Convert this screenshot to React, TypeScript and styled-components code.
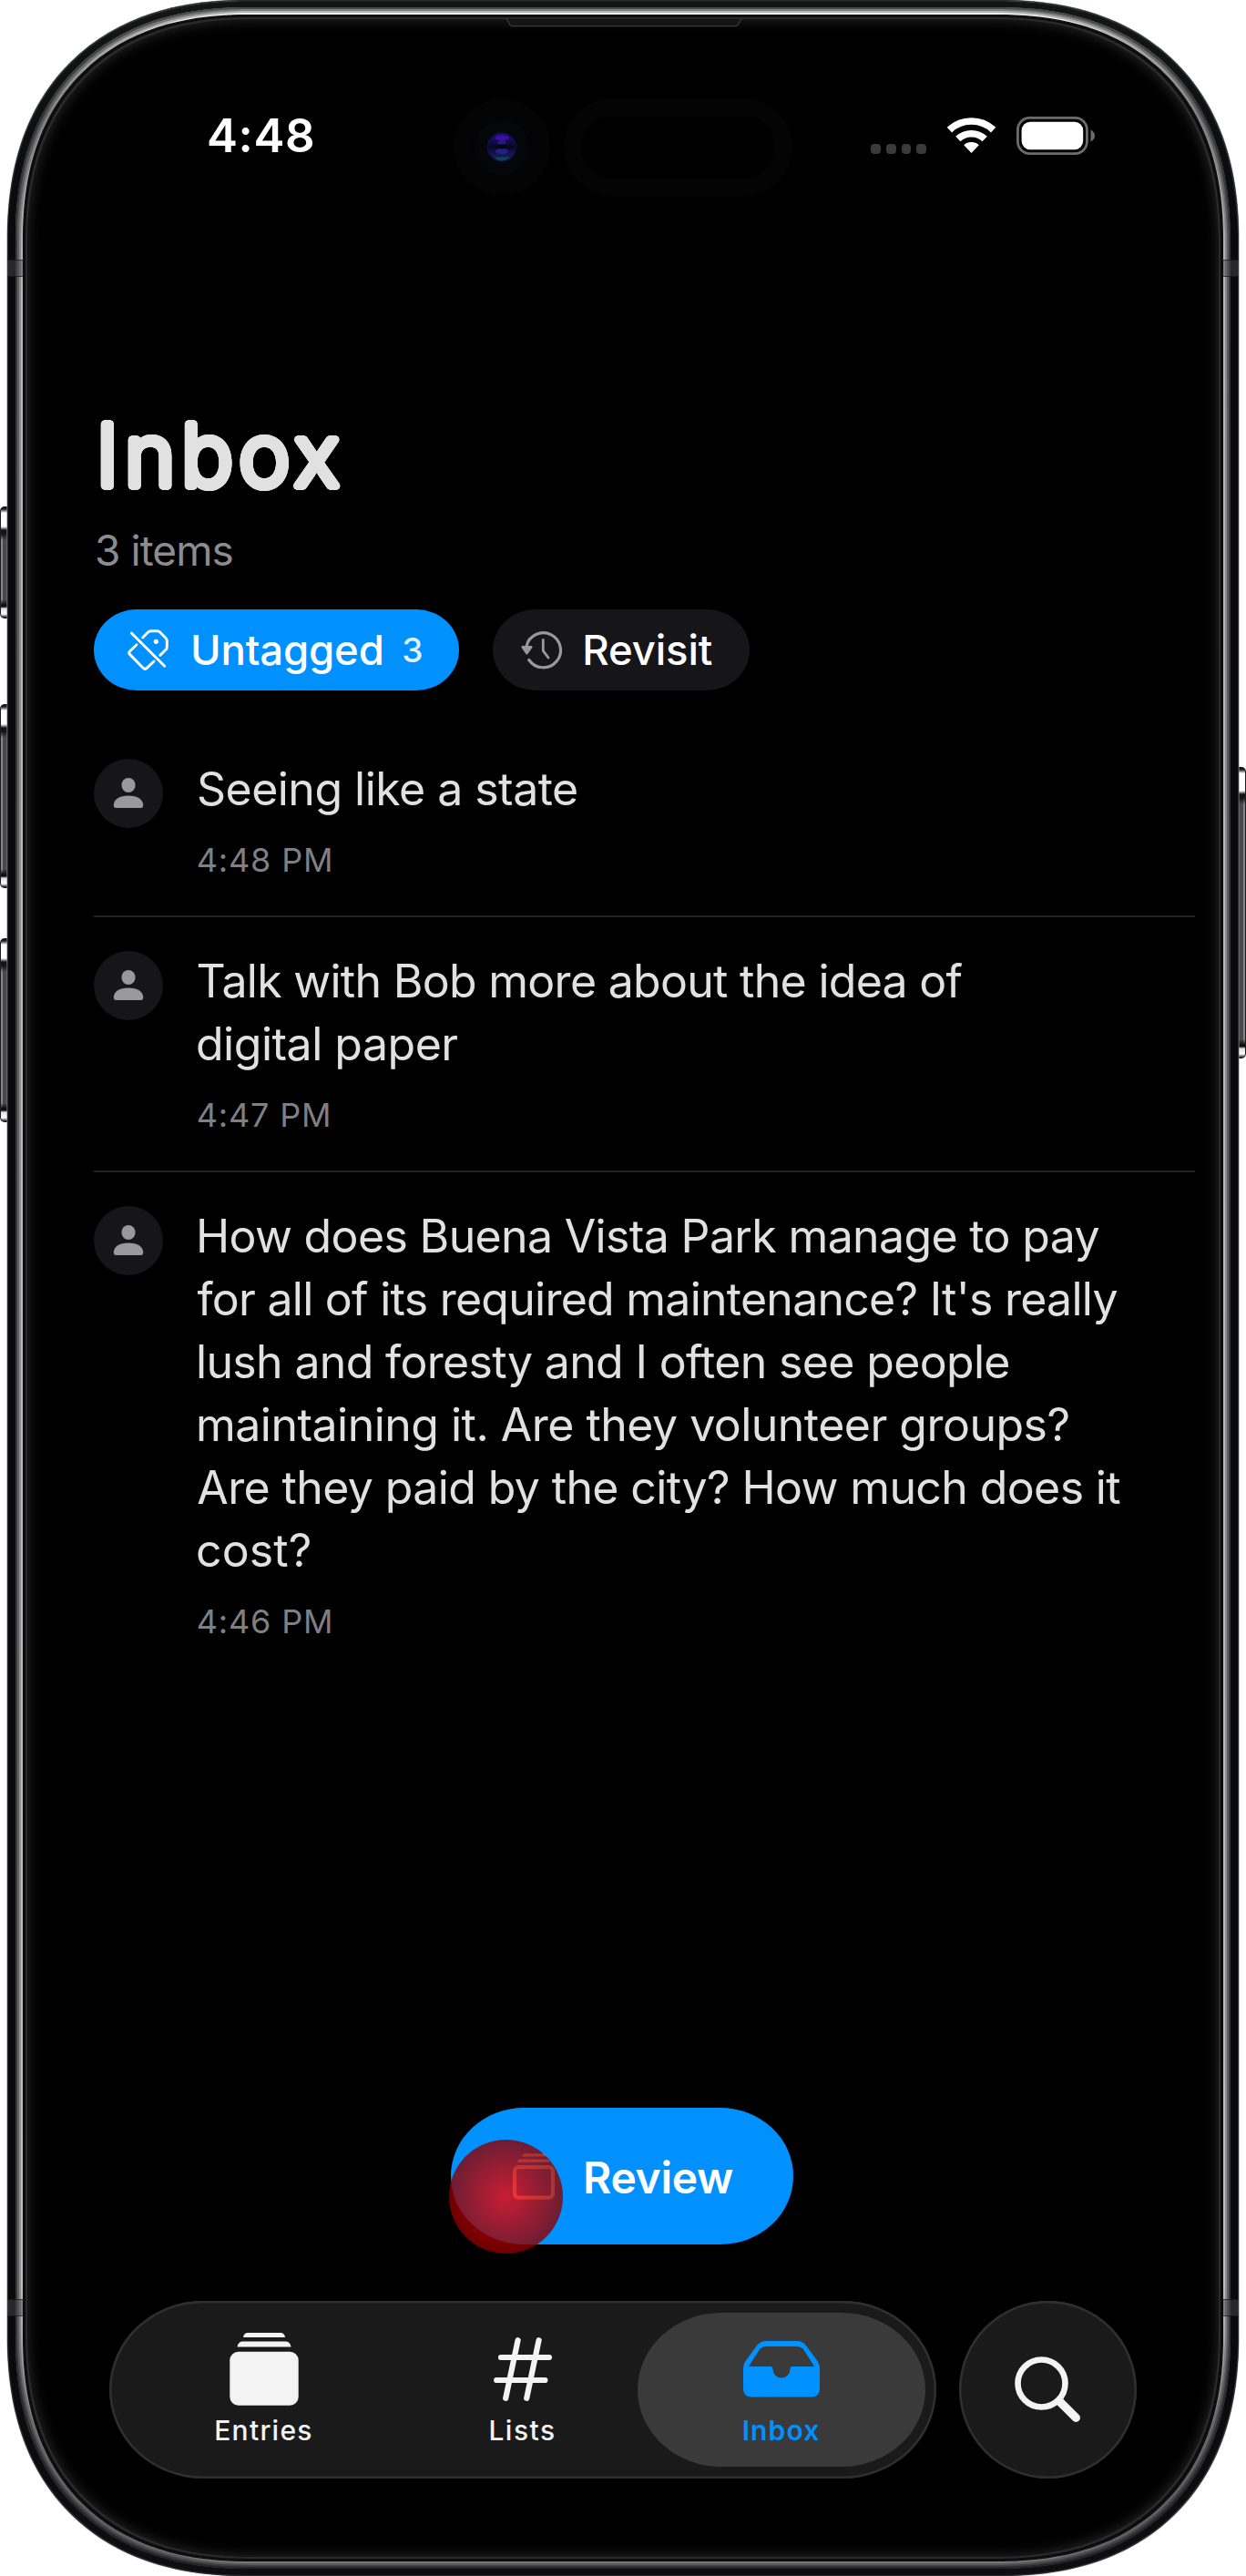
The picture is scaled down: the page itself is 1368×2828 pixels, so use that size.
import React from "react";
import styled, { createGlobalStyle, css } from "styled-components";

const BLUE = "#0091ff";
const SOFT_WHITE = "#f3f3f3";
const SECONDARY = "#8b8b90";

const Global = createGlobalStyle`
  *, *::before, *::after { box-sizing: border-box; }
  body { margin: 0; background: #fff; }
`;

/* Continuous-curvature corners, with plain round ones as the fallback. */
const corners = (round: number, smooth: number) => css`
  border-radius: ${round}px;
  @supports (corner-shape: superellipse(1.2)) {
    border-radius: ${smooth}px;
    corner-shape: superellipse(1.2);
  }
`;

/* ---------- Device shell ---------- */

const Page = styled.div`
  position: relative;
  width: 1368px;
  height: 2828px;
  padding: 0 8px;
  overflow: hidden;
  background: #fff;
  font-family: Inter, "Liberation Sans", sans-serif;
  -webkit-font-smoothing: antialiased;
`;

const Body = styled.div`
  position: relative;
  width: 1352px;
  height: 2828px;
  padding: 8px 9px;
  ${corners(237, 265)}
  background: linear-gradient(180deg, #141615 0, #0a0a0d 240px, #0a0a0d 2600px, #0e0e11 100%);
  box-shadow: 0 0 0 0.5px #8a8d8c, inset 0 0 0 1px #2a2c2c, inset 0 1px 1px #7f8784;
`;

const Ring = styled.div`
  position: relative;
  height: 100%;
  padding: 9px;
  ${corners(228, 256)}
  background: linear-gradient(180deg, #f0f0f0 0, #e6e6e6 30px, #a9a9ab 120px, #b6b6b8 320px, #bdbdbf 2500px, #8a8a8d 2640px, #77777a 100%);
  box-shadow:
    inset 0 0 0 2px rgba(0, 0, 0, 0.4),
    inset 0 0 0 4px rgba(0, 0, 0, 0.3),
    inset 0 0 0 6px rgba(0, 0, 0, 0.25);
`;

const Screen = styled.main`
  position: relative;
  display: flex;
  flex-direction: column;
  height: 100%;
  padding-bottom: 90px;
  ${corners(219, 247)}
  background: #000;
  box-shadow:
    0 0 0 1px #0a0a0a,
    inset 0 0 0 2px #0c0c0d,
    inset 0 0 0 4px #2a2a2b,
    inset 0 0 16px 4px #2c2c2d;
`;

const Antenna = styled.span<{ $side: "left" | "right"; $top: number }>`
  position: absolute;
  ${(p) => p.$side}: 0;
  top: ${(p) => p.$top}px;
  width: 17px;
  height: 19px;
  background: rgba(70, 70, 72, 0.5);
  border: solid rgba(11, 11, 12, 0.6);
  border-width: 1px 0;
`;

const SideButton = styled.span<{ $side: "left" | "right"; $top: number; $height: number; $cap: number }>`
  position: absolute;
  ${(p) => p.$side}: 0;
  top: ${(p) => p.$top}px;
  width: 9px;
  height: ${(p) => p.$height}px;
  border-radius: ${(p) => (p.$side === "left" ? "5px 0 0 5px" : "0 5px 5px 0")};
  background:
    linear-gradient(
      180deg,
      #0a0a0a 0,
      #222 3px,
      #fff 7px,
      #fff ${(p) => p.$cap - 2}px,
      #141416 ${(p) => p.$cap + 2}px,
      #141416 ${(p) => p.$cap + 6}px,
      transparent ${(p) => p.$cap + 13}px,
      transparent calc(100% - 21px),
      #0d0d0e calc(100% - 15px),
      #0d0d0e calc(100% - 13px),
      #ddd calc(100% - 11px),
      #fff calc(100% - 5px),
      #111 calc(100% - 1px)
    ),
    linear-gradient(
      ${(p) => (p.$side === "left" ? "90deg" : "270deg")},
      #0a0a0a 0, #0a0a0a 1px, #858587 1.5px, #858587 2.5px, #4a4a4c 3.5px, #4a4a4c 7px, #1b1b1d 9px
    );
  box-shadow: inset ${(p) => (p.$side === "left" ? "1px" : "-1px")} 0 0 #1c1c1c;
`;

const Earpiece = styled.svg`
  position: absolute;
  left: 529px;
  top: 3px;
`;

const Camera = styled.svg`
  position: absolute;
  left: 472px;
  top: 91px;
`;

const Island = styled.span`
  position: absolute;
  left: 593px;
  top: 91px;
  width: 251px;
  height: 107px;
  border: 19.5px solid #040404;
  border-radius: 54px;
`;

/* ---------- Status bar ---------- */

const StatusBar = styled.header`
  display: flex;
  align-items: center;
  justify-content: space-between;
  flex: none;
  height: 263px;
  padding: 0 139px 0 201px;
`;

const Time = styled.time`
  font-size: 51px;
  font-weight: 600;
  letter-spacing: 0.6px;
  color: #fff;
`;

const StatusIcons = styled.div`
  display: flex;
  align-items: center;
  gap: 23px;
`;

const CellDots = styled.div`
  display: flex;
  gap: 6px;
  margin-top: 30px;
`;

const CellDot = styled.i`
  width: 10.7px;
  height: 11px;
  border-radius: 4px;
  background: #3a3a3b;
`;

/* ---------- Heading and filters ---------- */

const Content = styled.section`
  flex: 1;
  padding: 170px 30px 0 77px;
`;

/* A light face thickened by a round outline gives the soft letter ends. */
const ring = (r: number, n: number) =>
  Array.from({ length: n }, (_, i) => {
    const a = (i / n) * Math.PI * 2;
    return `${(Math.cos(a) * r).toFixed(2)}px ${(Math.sin(a) * r).toFixed(2)}px 0 #e1e1e1`;
  }).join(", ");

const Title = styled.h1`
  margin: 0;
  padding-left: 2.5px;
  font-size: 95px;
  font-weight: 300;
  line-height: 100px;
  letter-spacing: 6.2px;
  color: #e1e1e1;
  text-shadow: ${ring(3.8, 24)};
`;

const Subtitle = styled.p`
  margin: 26px 0 0;
  padding-left: 1px;
  font-size: 46px;
  line-height: 56px;
  letter-spacing: -0.93px;
  color: ${SECONDARY};
`;

const Filters = styled.div`
  display: flex;
  gap: 37px;
  margin: 37px 0 38px;
`;

const Chip = styled.button<{ $active?: boolean }>`
  display: flex;
  align-items: center;
  height: 89px;
  padding: ${(p) => (p.$active ? "0 40px 0 36px" : "0 41px 0 30.5px")};
  border: 0;
  border-radius: 47px / 44.5px;
  background: ${(p) => (p.$active ? BLUE : "#161618")};
  color: #fff;
  font-family: inherit;
`;

const ChipLabel = styled.span<{ $gap: number }>`
  margin-left: ${(p) => p.$gap}px;
  font-size: 45.5px;
  font-weight: 500;
  letter-spacing: -0.15px;
`;

const ChipCount = styled.span`
  margin-left: 19.5px;
  font-size: 37px;
  font-weight: 500;
  color: rgba(255, 255, 255, 0.88);
`;

/* ---------- List ---------- */

const List = styled.ul`
  margin: 0;
  padding: 0;
  list-style: none;
`;

const Row = styled.li`
  display: flex;
  align-items: flex-start;
  gap: 36px;
  padding: 35.5px 0 39px;
  &:not(:last-child) { border-bottom: 2px solid #232325; }
`;

const Avatar = styled.span`
  flex: none;
  width: 76px;
  height: 76px;
  margin-top: 1.5px;
  border-radius: 50%;
  background: #161618;
`;

const RowText = styled.div`
  display: flex;
  flex-direction: column;
  gap: 21.6px;
`;

const Note = styled.p`
  margin: 0;
  font-size: 50px;
  line-height: 69px;
  color: #e1e1e1;
`;

const Line = styled.span<{ $track: number; $shift?: number }>`
  display: block;
  white-space: nowrap;
  padding-left: ${(p) => p.$shift ?? 0}px;
  letter-spacing: ${(p) => p.$track}px;
`;

const Stamp = styled.time`
  padding-left: 0.7px;
  font-size: 36px;
  line-height: 44px;
  letter-spacing: 0.84px;
  color: #7f7f84;
`;

/* ---------- Floating action ---------- */

const Review = styled.button`
  position: relative;
  display: flex;
  align-items: center;
  align-self: center;
  flex: none;
  width: 376px;
  height: 150px;
  margin: 0 2px 62px 0;
  padding: 0 0 0 68px;
  border: 0;
  border-radius: 80px / 75px;
  background: ${BLUE};
  color: #fff;
  font-family: inherit;
`;

const ReviewLabel = styled.span`
  margin: 2px 0 0 31px;
  font-size: 48px;
  font-weight: 600;
  letter-spacing: -0.32px;
`;

const Touch = styled.span`
  position: absolute;
  left: -2px;
  top: 35px;
  width: 125px;
  height: 125px;
  border-radius: 50%;
  background: radial-gradient(circle closest-side, rgba(250, 0, 0, 0.8) 0, rgba(136, 0, 0, 0.8) 100%);
`;

/* ---------- Bottom navigation ---------- */

const BottomBar = styled.nav`
  display: flex;
  flex: none;
  gap: 25px;
  padding-left: 93.5px;
`;

const glass = css`
  height: 195px;
  background: #1a1a1a;
  box-shadow: inset 0 0 0 2.5px #2f2f2f, inset 0 2px 1px -1px #3a3a3a;
`;

const TabGroup = styled.div`
  ${glass}
  display: flex;
  width: 908px;
  padding: 35px 28px 0;
  border-radius: 103px / 97.5px;
`;

const Tab = styled.a<{ $active?: boolean }>`
  position: relative;
  display: flex;
  flex-direction: column;
  align-items: center;
  gap: 9px;
  width: 284px;
  color: ${(p) => (p.$active ? BLUE : SOFT_WHITE)};
  ${(p) =>
    p.$active &&
    css`
      &::before {
        content: "";
        position: absolute;
        left: -16px;
        right: -16px;
        top: -22px;
        height: 169px;
        border-radius: 92px / 84.5px;
        background: #3a3a3a;
      }
    `}
`;

const TabIcon = styled.span`
  position: relative;
  display: flex;
  align-items: center;
  justify-content: center;
  height: 80px;
`;

const TabLabel = styled.span<{ $bold?: boolean; $track: number }>`
  position: relative;
  font-size: 30px;
  font-weight: ${(p) => (p.$bold ? 600 : 500)};
  line-height: 36px;
  letter-spacing: ${(p) => p.$track}px;
`;

const SearchButton = styled.button`
  ${glass}
  display: flex;
  align-items: center;
  justify-content: center;
  width: 195px;
  padding: 0;
  border: 0;
  border-radius: 50%;
`;

/* ---------- Icons ---------- */

const WifiIcon = () => (
  <svg width="53" height="40" viewBox="0 0 53 40" fill="none" stroke="#fff">
    <path d="M2.4 13.6A35 35 0 0 1 50.6 13.6" strokeWidth="7.7" />
    <path d="M11.8 23.6A21.3 21.3 0 0 1 41.2 23.6" strokeWidth="7.6" />
    <path d="M18.2 30.3A12 12 0 0 1 34.8 30.3L26.5 39Z" fill="#fff" stroke="none" />
  </svg>
);

const BatteryIcon = () => (
  <svg width="87" height="42" viewBox="0 0 87 42">
    <rect x="1.4" y="1.4" width="76" height="39.2" rx="13" fill="none" stroke="#6c6c6d" strokeWidth="2.8" />
    <rect x="5.6" y="5.8" width="67.6" height="30.4" rx="9.5" fill="#fff" />
    <path d="M81.5 14.5Q86 17 86 21T81.5 27.5Z" fill="#6c6c6d" />
  </svg>
);

const TagSlashIcon = () => (
  <svg width="47" height="48" viewBox="0 0 47 48" fill="none" stroke="#fff" strokeWidth="2.9" strokeLinecap="round" strokeLinejoin="round">
    <path d="M17.7 10 23.9 3.8Q25 2.7 26.6 2.7H33.8Q35.3 2.7 36.4 3.8L43.2 10.8Q44.3 11.9 44.3 13.4V20.4Q44.3 22 43.2 23L36.8 29.4" />
    <path d="M11 17.7 3.5 25Q1.8 26.7 3.5 28.4L18.3 43.4Q20.3 45.3 22.3 43.4L30 36" />
    <path d="M5.3 5 41.7 41.3" />
    <circle cx="32.3" cy="14.3" r="2.6" fill="#fff" stroke="none" />
  </svg>
);

const HistoryIcon = () => (
  <svg width="46" height="43" viewBox="0 0 46 43" fill="none" stroke="#98989d" strokeWidth="3.2" strokeLinecap="round" strokeLinejoin="round">
    <path d="M6 17.5A19 19 0 1 1 8.8 32.5" />
    <path d="M24.3 10.5V22.3L30 30" strokeWidth="2.8" />
    <path d="M1.6 18.3H11.4L6.4 25.2Z" fill="#98989d" strokeWidth="2.4" />
  </svg>
);

const PersonIcon = () => (
  <svg width="76" height="76" viewBox="0 0 76 76" fill="#98989d">
    <ellipse cx="38" cy="29" rx="7.6" ry="8.1" />
    <path d="M21.8 50.5C22.3 44.5 28 40.6 38 40.6S53.7 44.5 54.2 50.5Q54.4 54 51.4 54H24.6Q21.6 54 21.8 50.5Z" />
  </svg>
);

const StackOutlineIcon = () => (
  <svg width="46" height="51" viewBox="0 0 46 51" fill="#fff">
    <path d="M13 .2H33Q35.4.6 36 3.4H10Q10.6.6 13 .2Z" />
    <path d="M8 6.4H38Q40.6 6.8 41.2 9.8H4.8Q5.4 6.8 8 6.4Z" />
    <rect x="2" y="15.2" width="42" height="33.4" rx="4.5" fill="none" stroke="#fff" strokeWidth="4.2" />
  </svg>
);

const StackIcon = () => (
  <svg width="76" height="80" viewBox="0 0 76 80" fill={SOFT_WHITE}>
    <path d="M19.5 0H56.5Q60.4.6 61 5H15Q15.6.6 19.5 0Z" />
    <path d="M14 9.6H62Q66.6 10.2 67.5 15.4H8.5Q9.4 10.2 14 9.6Z" />
    <rect x="0.3" y="20.8" width="75.4" height="59" rx="9.5" />
  </svg>
);

const HashIcon = () => (
  <svg width="64" height="70" viewBox="0 0 64 70" fill="none" stroke={SOFT_WHITE} strokeWidth="6.2" strokeLinecap="round">
    <path d="M26.6 3.2 13.2 66.8M49.6 3.2 36.2 66.8M8 22H61M3.2 47H56.4" />
  </svg>
);

const TrayIcon = () => (
  <svg width="84" height="62" viewBox="0 0 84 62" fill={BLUE}>
    <path
      fillRule="evenodd"
      d="M0 30Q0 26 2.2 22.5L15 5Q19 0 25 0H59Q65 0 69 5L81.8 22.5Q84 26 84 30V52Q84 61.5 75 61.5H9Q0 61.5 0 52ZM6.5 27 18.5 8.5Q21 6 25 6H59Q63 6 65.5 8.5L77.5 27Q78 28 77 28H54Q51.5 28 51.5 31A9.5 9.5 0 0 1 32.5 31Q32.5 28 30 28H7Q6 28 6.5 27Z"
    />
  </svg>
);

const SearchIcon = () => (
  <svg width="73" height="73" viewBox="0 0 73 73" fill="none" stroke={SOFT_WHITE} strokeLinecap="round">
    <circle cx="29.5" cy="29.5" r="26" strokeWidth="6.6" />
    <path d="M49.5 49.5 67.3 67.3" strokeWidth="9.4" />
  </svg>
);

/* ---------- Data ---------- */

type NoteLine = { text: string; track: number; shift?: number };
type Item = { lines: NoteLine[]; time: string };

const items: Item[] = [
  { lines: [{ text: "Seeing like a state", track: -0.53, shift: 1 }], time: "4:48 PM" },
  {
    lines: [
      { text: "Talk with Bob more about the idea of", track: -0.71, shift: 0.5 },
      { text: "digital paper", track: -0.5 },
    ],
    time: "4:47 PM",
  },
  {
    lines: [
      { text: "How does Buena Vista Park manage to pay", track: -0.65 },
      { text: "for all of its required maintenance? It's really", track: -0.74, shift: 1.5 },
      { text: "lush and foresty and I often see people", track: -0.66 },
      { text: "maintaining it. Are they volunteer groups?", track: -0.52 },
      { text: "Are they paid by the city? How much does it", track: -0.61, shift: 1.3 },
      { text: "cost?", track: 0.1 },
    ],
    time: "4:46 PM",
  },
];

export default function App() {
  return (
    <Page>
      <Global />
      <SideButton $side="left" $top={556} $height={123} $cap={24} />
      <SideButton $side="left" $top={773} $height={202} $cap={24} />
      <SideButton $side="left" $top={1030} $height={202} $cap={24} />
      <SideButton $side="right" $top={842} $height={320} $cap={28} />
      <Body>
        <Ring>
          <Screen>
            <Earpiece width="260" height="10" viewBox="0 0 260 10">
              <path d="M0 .8Q2.2 1 3.2 4.4T7 8.6H253Q256 8 256.8 4.4T260 .8Z" fill="#151515" />
              <path d="M0 .8Q2.2 1 3.2 4.4T7 8.6H253Q256 8 256.8 4.4T260 .8" fill="none" stroke="#383838" strokeWidth="1.2" />
            </Earpiece>
            <Camera width="106" height="107" viewBox="0 0 106 107">
              <defs>
                <linearGradient id="lens" x1="0" y1="0" x2="0" y2="1">
                  <stop offset="0" stopColor="#30088a" />
                  <stop offset=".35" stopColor="#120845" />
                  <stop offset=".5" stopColor="#06061a" />
                  <stop offset=".72" stopColor="#151455" />
                  <stop offset="1" stopColor="#0a2c44" />
                </linearGradient>
              </defs>
              <circle cx="53" cy="53.5" r="53" fill="#040404" />
              <circle cx="53" cy="53.5" r="31" fill="#05060a" stroke="#020208" strokeWidth="2" />
              <circle cx="53" cy="53.5" r="15.4" fill="url(#lens)" stroke="#0e1040" strokeWidth="1.6" />
              <ellipse cx="53" cy="43.5" rx="7.5" ry="2.8" fill="#4b10c0" opacity=".7" />
              <ellipse cx="53" cy="48.5" rx="4.5" ry="2.4" fill="#2a2490" opacity=".7" />
              <ellipse cx="53" cy="58" rx="7" ry="3.2" fill="#2b2a9a" opacity=".7" />
              <ellipse cx="53" cy="53" rx="3.6" ry="2.4" fill="#04040f" />
              <path d="M44 64.5H62Q58 68.5 53 68.5T44 64.5Z" fill="#0d4a63" opacity=".8" />
            </Camera>
            <Island />
            <StatusBar>
              <Time>4:48</Time>
              <StatusIcons>
                <CellDots>
                  <CellDot />
                  <CellDot />
                  <CellDot />
                  <CellDot />
                </CellDots>
                <WifiIcon />
                <BatteryIcon />
              </StatusIcons>
            </StatusBar>
            <Content>
              <Title>Inbox</Title>
              <Subtitle>3 items</Subtitle>
              <Filters>
                <Chip $active>
                  <TagSlashIcon />
                  <ChipLabel $gap={23}>Untagged</ChipLabel>
                  <ChipCount>3</ChipCount>
                </Chip>
                <Chip>
                  <HistoryIcon />
                  <ChipLabel $gap={21.5}>Revisit</ChipLabel>
                </Chip>
              </Filters>
              <List>
                {items.map((item) => (
                  <Row key={item.time}>
                    <Avatar>
                      <PersonIcon />
                    </Avatar>
                    <RowText>
                      <Note>
                        {item.lines.map((l) => (
                          <Line key={l.text} $track={l.track} $shift={l.shift}>
                            {l.text}
                          </Line>
                        ))}
                      </Note>
                      <Stamp>{item.time}</Stamp>
                    </RowText>
                  </Row>
                ))}
              </List>
            </Content>
            <Review>
              <StackOutlineIcon />
              <ReviewLabel>Review</ReviewLabel>
              <Touch />
            </Review>
            <BottomBar>
              <TabGroup>
                <Tab>
                  <TabIcon><StackIcon /></TabIcon>
                  <TabLabel $track={1.25}>Entries</TabLabel>
                </Tab>
                <Tab>
                  <TabIcon><HashIcon /></TabIcon>
                  <TabLabel $track={1.47}>Lists</TabLabel>
                </Tab>
                <Tab $active>
                  <TabIcon><TrayIcon /></TabIcon>
                  <TabLabel $bold $track={1.12}>Inbox</TabLabel>
                </Tab>
              </TabGroup>
              <SearchButton aria-label="Search">
                <SearchIcon />
              </SearchButton>
            </BottomBar>
          </Screen>
        </Ring>
        <Antenna $side="left" $top={285} />
        <Antenna $side="right" $top={285} />
        <Antenna $side="left" $top={2524} />
        <Antenna $side="right" $top={2524} />
      </Body>
    </Page>
  );
}
